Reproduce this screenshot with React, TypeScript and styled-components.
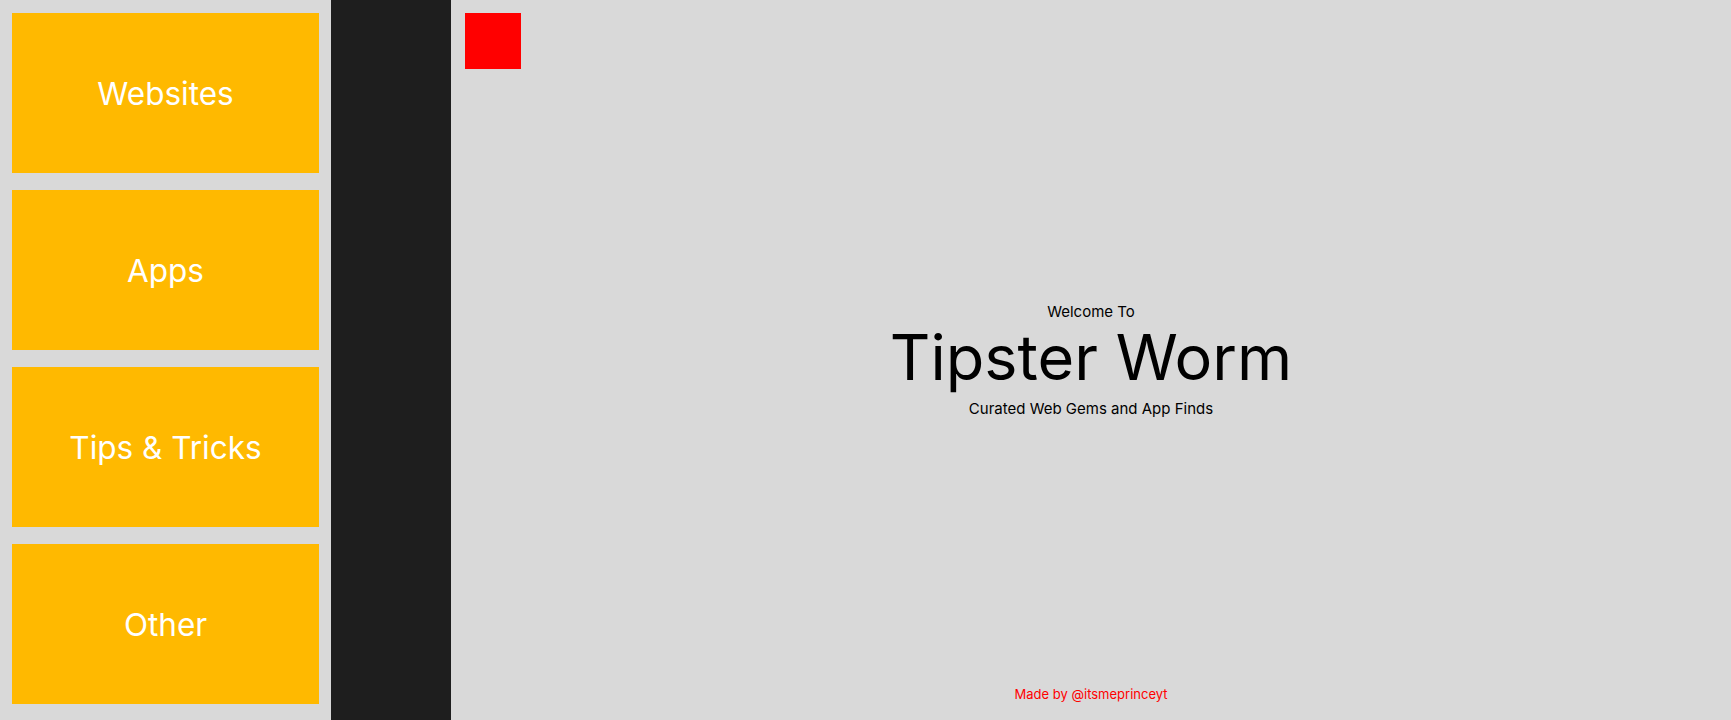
import React from 'react'
import styled, { createGlobalStyle } from 'styled-components'

const GlobalStyle = createGlobalStyle`
  html, body {
    margin: 0;
    padding: 0;
    height: 100%;
  }
  body {
    font-family: Inter, "Noto Sans", sans-serif;
    background: #d9d9d9;
  }
  #root {
    height: 100%;
  }
`

const Layout = styled.div`
  display: flex;
  height: 100vh;
  width: 100%;
  overflow: hidden;
`

const Sidebar = styled.nav`
  display: flex;
  flex-direction: column;
  gap: 17px;
  width: 331px;
  box-sizing: border-box;
  padding: 13px 12px 16px 12px;
  background: #d9d9d9;
  flex-shrink: 0;
`

const CategoryCard = styled.a`
  display: flex;
  align-items: center;
  justify-content: center;
  height: 160px;
  background: #ffb900;
  color: #ffffff;
  font-size: 31.5px;
  font-weight: 400;
  text-decoration: none;
  cursor: pointer;
`

const Divider = styled.div`
  width: 120px;
  flex-shrink: 0;
  background: #1e1e1e;
`

const Main = styled.main`
  position: relative;
  flex: 1;
  display: flex;
  flex-direction: column;
  background: #d9d9d9;
`

const MenuButton = styled.button`
  position: absolute;
  top: 13px;
  left: 14px;
  width: 56px;
  height: 56px;
  border: none;
  padding: 0;
  background: #ff0000;
  cursor: pointer;
`

const Hero = styled.section`
  flex: 1;
  display: flex;
  flex-direction: column;
  align-items: center;
  justify-content: center;
  padding-top: 34px;
  color: #000000;
`

const Kicker = styled.div`
  font-size: 15px;
`

const Title = styled.h1`
  margin: 0;
  font-size: 63px;
  font-weight: 400;
  line-height: 72.8px;
`

const Tagline = styled.div`
  margin-top: 6px;
  font-size: 15px;
`

const Footer = styled.footer`
  text-align: center;
  padding-bottom: 18px;
  font-size: 13px;
  color: #ff0000;
`

const categories = ['Websites', 'Apps', 'Tips & Tricks', 'Other']

export default function App() {
  return (
    <>
      <GlobalStyle />
      <Layout>
        <Sidebar>
          {categories.map(name => (
            <CategoryCard key={name}>{name}</CategoryCard>
          ))}
        </Sidebar>
        <Divider />
        <Main>
          <MenuButton aria-label="menu" />
          <Hero>
            <Kicker>Welcome To</Kicker>
            <Title>Tipster Worm</Title>
            <Tagline>Curated Web Gems and App Finds</Tagline>
          </Hero>
          <Footer>Made by @itsmeprinceyt</Footer>
        </Main>
      </Layout>
    </>
  )
}
